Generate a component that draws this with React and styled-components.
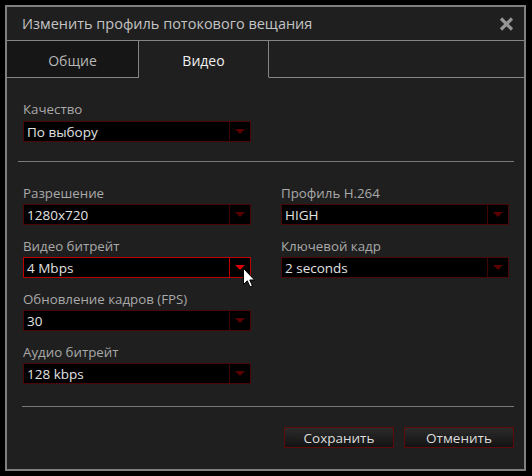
import React from 'react';
import styled, { createGlobalStyle } from 'styled-components';

const Global = createGlobalStyle`
  html, body { margin: 0; padding: 0; background: #000; }
  body {
    width: 532px; height: 476px; overflow: hidden;
    font-family: "Open Sans", "Noto Sans", sans-serif;
  }
  * { box-sizing: border-box; }
`;

const Screen = styled.div`
  width: 532px;
  height: 476px;
  padding: 5px 0 0 5px;
`;

const Dialog = styled.div`
  width: 521px;
  height: 466px;
  border: 2px solid #7f7f7f;
  background: #1f1f1f;
  display: flex;
  flex-direction: column;
`;

const TitleBar = styled.div`
  height: 34px;
  border-bottom: 1px solid #858585;
  display: flex;
  align-items: center;
  justify-content: space-between;
  padding: 0 10px 0 15px;
  color: #c4c4c4;
  font-size: 14.5px;
`;

const Title = styled.span`
  line-height: 18px;
  padding-top: 1px;
`;

const CloseBtn = styled.div`
  width: 16px;
  height: 15px;
  display: flex;
  align-items: center;
  justify-content: center;
`;

const TabBar = styled.div`
  height: 37px;
  display: flex;
`;

const Tab = styled.div`
  width: ${p => p.$w}px;
  height: 37px;
  border-right: 1px solid #858585;
  border-bottom: 1px solid ${p => (p.$active ? 'transparent' : '#858585')};
  background: ${p => (p.$active ? '#1f1f1f' : '#161616')};
  color: ${p => (p.$active ? '#f0f0f0' : '#b8b8b8')};
  font-size: 14px;
  display: flex;
  align-items: center;
  justify-content: center;
  padding-top: 2px;
`;

const TabFill = styled.div`
  flex: 1;
  border-bottom: 1px solid #858585;
`;

const Body = styled.div`
  flex: 1;
  display: flex;
  flex-direction: column;
  padding: 23px 10px 0 16px;
`;

const Field = styled.div`
  display: flex;
  flex-direction: column;
  width: 228px;
`;

const Label = styled.div`
  color: #a9a9a9;
  font-size: 13.3px;
  line-height: 17px;
  margin-bottom: ${p => p.$gap ?? 2}px;
`;

const SelectBox = styled.div`
  position: relative;
  height: 21px;
  background: #000;
  border: 1px solid ${p => (p.$hover ? '#b80000' : '#4a0707')};
  display: flex;
  align-items: center;
`;

const SelectValue = styled.div`
  flex: 1;
  color: #e2e2e2;
  font-size: 13.5px;
  line-height: 19px;
  padding-left: 3px;
  padding-top: 1px;
  white-space: nowrap;
`;

const ArrowCell = styled.div`
  width: 21px;
  height: 100%;
  border-left: 1px solid ${p => (p.$hover ? '#b80000' : '#3e0505')};
  display: flex;
  align-items: center;
  justify-content: center;
  &::after {
    content: '';
    width: 0;
    height: 0;
    border-left: 5px solid transparent;
    border-right: 5px solid transparent;
    border-top: 5px solid ${p => (p.$hover ? '#d80000' : '#5a0000')};
  }
`;

const Cursor = styled.svg`
  position: absolute;
  left: 219px;
  top: 10px;
  pointer-events: none;
`;

const Separator = styled.div`
  height: 1px;
  background: #7a7a7a;
  margin-left: ${p => p.$indent}px;
  margin-top: ${p => p.$top}px;
  margin-bottom: ${p => p.$bottom}px;
`;

const Columns = styled.div`
  display: flex;
  gap: 30px;
`;

const Column = styled.div`
  display: flex;
  flex-direction: column;
  gap: 13px;
`;

const ButtonRow = styled.div`
  display: flex;
  justify-content: flex-end;
  gap: 10px;
`;

const Button = styled.div`
  width: 110px;
  height: 21px;
  border: 1px solid #5e0a0a;
  background: linear-gradient(#2b2b2b, #131313);
  color: #dedede;
  font-size: 13.5px;
  display: flex;
  align-items: center;
  justify-content: center;
  line-height: 18px;
  padding-top: 1px;
`;

function Select({ label, value, hover, labelGap }) {
  return (
    <Field>
      <Label $gap={labelGap}>{label}</Label>
      <SelectBox $hover={hover}>
        <SelectValue>{value}</SelectValue>
        <ArrowCell $hover={hover} />
        {hover && (
          <Cursor width="13" height="20" viewBox="0 0 13 20">
            <path
              d="M0.5 0.5 L0.5 16.5 L4.3 12.8 L7 18.8 L9.4 17.8 L6.8 12 L11.6 12 Z"
              fill="#fff"
              stroke="#000"
              strokeWidth="1"
              strokeLinejoin="miter"
            />
          </Cursor>
        )}
      </SelectBox>
    </Field>
  );
}

const leftFields = [
  { label: 'Разрешение', value: '1280x720' },
  { label: 'Видео битрейт', value: '4 Mbps', hover: true },
  { label: 'Обновление кадров (FPS)', value: '30' },
  { label: 'Аудио битрейт', value: '128 kbps' },
];

const rightFields = [
  { label: 'Профиль H.264', value: 'HIGH' },
  { label: 'Ключевой кадр', value: '2 seconds' },
];

export default function App() {
  return (
    <>
      <Global />
      <Screen>
        <Dialog>
          <TitleBar>
            <Title>Изменить профиль потокового вещания</Title>
            <CloseBtn>
              <svg width="15" height="14" viewBox="0 0 15 14">
                <path d="M2 1.5 L13 12.5 M13 1.5 L2 12.5" stroke="#959595" strokeWidth="3.2" strokeLinecap="butt" />
              </svg>
            </CloseBtn>
          </TitleBar>
          <TabBar>
            <Tab $w={132}>Общие</Tab>
            <Tab $w={130} $active>Видео</Tab>
            <TabFill />
          </TabBar>
          <Body>
            <Select label="Качество" value="По выбору" labelGap={3} />
            <Separator $indent={-5} $top={19} $bottom={23} />
            <Columns>
              <Column>
                {leftFields.map(f => (
                  <Select key={f.label} {...f} />
                ))}
              </Column>
              <Column>
                {rightFields.map(f => (
                  <Select key={f.label} {...f} />
                ))}
              </Column>
            </Columns>
            <Separator $indent={-1} $top={22} $bottom={20} />
            <ButtonRow>
              <Button>Сохранить</Button>
              <Button>Отменить</Button>
            </ButtonRow>
          </Body>
        </Dialog>
      </Screen>
    </>
  );
}
